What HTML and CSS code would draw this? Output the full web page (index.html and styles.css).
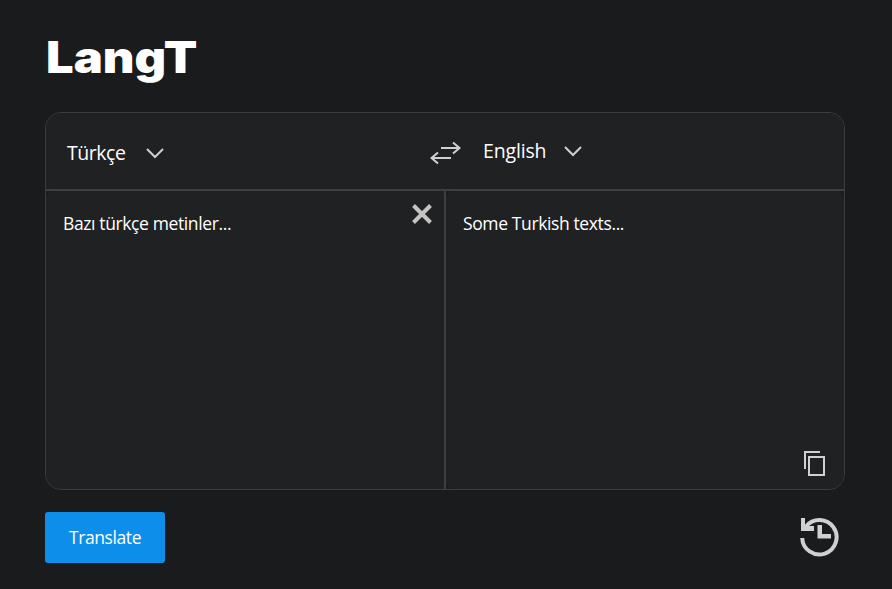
FILE: index.html
```
<!DOCTYPE html>
<html lang="en">
<head>
<meta charset="utf-8">
<title>LangT</title>
<link rel="stylesheet" href="styles.css">
</head>
<body>
<main class="app">
  <h1 class="brand">LangT</h1>
  <section class="card">
    <header class="languages">
      <div class="language source"><span class="source-name">Türkçe</span>
        <svg width="20" height="12" viewBox="0 0 20 12"><path d="M2 2l8 8 8-8"/></svg>
      </div>
      <svg class="swap" width="32" height="24" viewBox="0 0 32 24"><path d="M11 7h19M23 1.500L29.500 7L23 12.500M21 17H2M8 11.500L1.500 17L8 22.500"/></svg>
      <div class="language target"><span class="target-name">English</span>
        <svg width="20" height="12" viewBox="0 0 20 12"><path d="M2 2l8 8 8-8"/></svg>
      </div>
    </header>
    <div class="panes">
      <div class="pane"><p class="source-text">Bazı türkçe metinler...</p>
        <svg class="clear" width="20" height="20" viewBox="0 0 20 20"><path d="M1.500 1.500l17 17M18.500 1.500l-17 17"/></svg>
      </div>
      <div class="pane"><p class="target-text">Some Turkish texts...</p>
        <svg class="copy" width="22" height="26" viewBox="0 0 22 26"><path d="M1 18V1h15M5 6h15v18H5z"/></svg>
      </div>
    </div>
  </section>
  <footer class="actions">
    <button class="translate"><span>Translate</span></button>
    <svg class="history" width="40" height="40" viewBox="0 0 40 40"><path class="ring" d="M2.200 21A17.200 17.200 0 1 0 6 9.500"/><path class="solid" d="M1 1h4v8h9v5H1zM17.500 8h4.500v9h9v4.500H17.500z"/></svg>
  </footer>
</main>
</body>
</html>
```
FILE: styles.css
```
* { box-sizing: border-box; }
body {
  margin: 0;
  background: #1a1b1c;
  color: #fff;
  font-family: "Open Sans", "Noto Sans", sans-serif;
}
svg { display: block; flex: none; fill: none; stroke: #d0d0d0; stroke-width: 2; }
.app { width: 892px; height: 589px; padding: 30px 47px 0 45px; }
.brand {
  height: 82px;
  margin: 0;
  padding-left: 1px;
  font: 900 44px/54px Inter, sans-serif;
  transform: scaleX(1.11);
  transform-origin: left;
}
.card {
  width: 800px;
  height: 378px;
  border: 1px solid #3b3d3f;
  border-radius: 16px;
  overflow: hidden;
  background: #1b1c1d;
}
.languages {
  display: flex;
  height: 78px;
  padding-left: 21px;
  border-bottom: 2px solid #3b4042;
  background: #202123;
  font-size: 19.5px;
  line-height: 26px;
  letter-spacing: -.3px;
}
.source-name { letter-spacing: -.45px; }
.target-name { letter-spacing: -.15px; }
.language { display: flex; }
.source { width: 363px; padding-top: 27px; }
.source span { width: 77.5px; }
.source svg { margin-top: 7px; }
.swap { margin-top: 28px; }
.target { margin-left: 21px; padding-top: 25px; }
.target span { width: 79.5px; }
.target svg { margin-top: 7px; }
.panes { display: grid; grid-template-columns: 400px 398px; height: 298px; }
.pane {
  display: flex;
  justify-content: space-between;
  padding: 12px 17px;
  background: #202123;
  border-radius: 8px;
}
.pane:first-child {
  padding-right: 12px;
  border-right: 2px solid #3b4042;
  border-radius: 8px 0 0 8px;
}
.pane p { margin: 6px 0 0; font-size: 17.5px; line-height: 28px; letter-spacing: -.38px; white-space: nowrap; }
.clear { margin-top: .5px; stroke: #c4c4c4; stroke-width: 4; }
.copy { align-self: flex-end; margin-right: 1px; }
.actions {
  display: flex;
  justify-content: space-between;
  padding-top: 22px;
}
.translate {
  width: 120px;
  height: 51px;
  padding: 0;
  border: 0;
  border-radius: 3px;
  background: #0d8eeb;
  color: #fff;
  font: 17.5px/51px "Open Sans", sans-serif;
  letter-spacing: -.4px;
}
.history { margin: 5px 5.5px 0 0; stroke-width: 4; }
.history .solid { fill: #d0d0d0; stroke: none; }
```
